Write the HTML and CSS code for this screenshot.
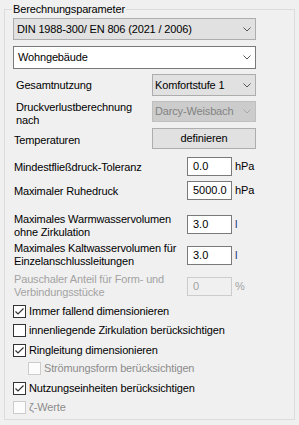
FILE: index.html
```html
<!DOCTYPE html>
<html lang="de">
<head>
<meta charset="utf-8">
<link rel="stylesheet" href="styles.css">
</head>
<body>
<div class="group">
  <div class="legend">Berechnungsparameter</div>

  <div class="combo c1"><span class="val">DIN 1988-300/ EN 806 (2021 / 2006)</span><svg class="chev" width="8" height="5" viewBox="0 0 8 5"><path d="M0.5 0.5 L4 4 L7.5 0.5" /></svg></div>
  <div class="combo c2 white"><span class="val">Wohngebäude</span><svg class="chev" width="8" height="5" viewBox="0 0 8 5"><path d="M0.5 0.5 L4 4 L7.5 0.5" /></svg></div>

  <div class="row r-gesamt">
    <div class="lbl ind">Gesamtnutzung</div>
    <div class="combo small"><span class="val">Komfortstufe 1</span><svg class="chev" width="8" height="5" viewBox="0 0 8 5"><path d="M0.5 0.5 L4 4 L7.5 0.5" /></svg></div>
  </div>

  <div class="row r-druck">
    <div class="lbl ind">Druckverlustberechnung<br>nach</div>
    <div class="combo small disabled"><span class="val">Darcy-Weisbach</span><svg class="chev" width="8" height="5" viewBox="0 0 8 5"><path d="M0.5 0.5 L4 4 L7.5 0.5" /></svg></div>
  </div>

  <div class="row r-temp">
    <div class="lbl">Temperaturen</div>
    <div class="btn">definieren</div>
  </div>

  <div class="trow r-mind">
    <div class="lbl">Mindestfließdruck-Toleranz</div>
    <div class="tb">0.0</div>
    <div class="unit">hPa</div>
  </div>

  <div class="trow r-ruhe">
    <div class="lbl">Maximaler Ruhedruck</div>
    <div class="tb">5000.0</div>
    <div class="unit">hPa</div>
  </div>

  <div class="trow two r-warm">
    <div class="lbl">Maximales Warmwasservolumen<br>ohne Zirkulation</div>
    <div class="tb">3.0</div>
    <div class="unit liter">l</div>
  </div>

  <div class="trow two r-kalt">
    <div class="lbl">Maximales Kaltwasservolumen für<br>Einzelanschlussleitungen</div>
    <div class="tb">3.0</div>
    <div class="unit liter">l</div>
  </div>

  <div class="trow two r-paus off">
    <div class="lbl">Pauschaler Anteil für Form- und<br>Verbindungsstücke</div>
    <div class="tb">0</div>
    <div class="unit">%</div>
  </div>

  <div class="cb first">
    <span class="box"><svg width="11" height="11" viewBox="0 0 11 11"><path d="M1.5 5.5 L4 8 L9.5 2.5" /></svg></span>
    <span class="txt">Immer fallend dimensionieren</span>
  </div>
  <div class="cb">
    <span class="box"></span>
    <span class="txt">innenliegende Zirkulation berücksichtigen</span>
  </div>
  <div class="cb g7">
    <span class="box"><svg width="11" height="11" viewBox="0 0 11 11"><path d="M1.5 5.5 L4 8 L9.5 2.5" /></svg></span>
    <span class="txt">Ringleitung dimensionieren</span>
  </div>
  <div class="cb sub off g5">
    <span class="box"></span>
    <span class="txt">Strömungsform berücksichtigen</span>
  </div>
  <div class="cb g7">
    <span class="box"><svg width="11" height="11" viewBox="0 0 11 11"><path d="M1.5 5.5 L4 8 L9.5 2.5" /></svg></span>
    <span class="txt">Nutzungseinheiten berücksichtigen</span>
  </div>
  <div class="cb off">
    <span class="box"></span>
    <span class="txt">ζ-Werte</span>
  </div>
</div>
</body>
</html>
```
FILE: styles.css
```css
* { box-sizing: border-box; }

html, body {
  margin: 0;
  padding: 0;
  background: #f0f0f0;
}

body {
  font-family: "Liberation Sans", Arial, sans-serif;
  font-size: 11px;
  letter-spacing: -0.15px;
  line-height: 13px;
  color: #000;
  width: 299px;
  height: 425px;
  overflow: hidden;
  padding-top: 9px;
}

.group {
  position: relative;
  margin-left: 4px;
  width: 291px;
  height: 411px;
  border: 1px solid #dcdcdc;
  padding: 0 0 0 8px;
  display: flex;
  flex-direction: column;
  align-items: flex-start;
}

.legend {
  position: absolute;
  top: -7px;
  left: 7px;
  padding: 0 1px;
  background: #f0f0f0;
}

.combo {
  display: flex;
  align-items: center;
  justify-content: space-between;
  height: 22px;
  border: 1px solid #adadad;
  background: #e1e1e1;
  padding: 0 4px 0 3px;
  white-space: nowrap;
}

.combo .chev path {
  fill: none;
  stroke: #555;
  stroke-width: 1;
}

.c1 {
  width: 243px;
  margin-top: 8px;
}

.c2 {
  width: 243px;
  height: 23px;
  margin-top: 6px;
  background: #fff;
  border-color: #7a7a7a;
  padding-left: 4px;
}

.combo.small {
  width: 104px;
  padding-left: 2px;
}

.combo.disabled {
  height: 21px;
  background: #cccccc;
  border-color: #bfbfbf;
  color: #838383;
}

.combo.disabled .chev path {
  stroke: #a8a8a8;
}

.row {
  display: grid;
  grid-template-columns: 139px 104px;
  align-items: start;
  width: 243px;
}

.lbl {
  white-space: nowrap;
  padding-left: 1px;
}

.lbl.ind {
  padding-left: 3px;
}

.r-gesamt {
  margin-top: 5px;
  height: 22px;
  align-items: center;
}

.r-druck {
  margin-top: 5px;
  height: 27px;
}

.r-temp {
  height: 21px;
  align-items: center;
}

.r-temp .lbl {
  padding-top: 3px;
}

.btn {
  height: 21px;
  width: 104px;
  border: 1px solid #adadad;
  background: #e1e1e1;
  display: flex;
  align-items: center;
  justify-content: center;
}

.trow {
  display: grid;
  grid-template-columns: 174px 45px auto;
  align-items: start;
  height: 19px;
}

.tb {
  height: 19px;
  width: 45px;
  border: 1px solid #7a7a7a;
  background: #fff;
  padding-left: 5px;
  display: flex;
  align-items: center;
  letter-spacing: 0;
}

.unit {
  padding-left: 3px;
  margin-top: 3px;
}

.unit.liter {
  color: #1f2f7a;
}

.r-mind {
  margin-top: 8px;
}

.r-mind .lbl,
.r-ruhe .lbl {
  margin-top: 4px;
}

.r-ruhe {
  margin-top: 5px;
}

.trow.two {
  height: 26px;
}

.r-warm {
  margin-top: 13px;
}

.r-warm .tb,
.r-warm .unit {
  margin-top: 2px;
}

.r-warm .unit {
  margin-top: 5px;
}

.r-kalt {
  margin-top: 3px;
}

.r-kalt .tb,
.r-paus .tb {
  margin-top: 4px;
}

.r-kalt .unit,
.r-paus .unit {
  margin-top: 7px;
}

.r-paus {
  margin-top: 5px;
}

.off {
  color: #a3a3a3;
}

.off .tb {
  border-color: #cccccc;
  background: #f0f0f0;
  color: #a3a3a3;
}

.cb {
  display: flex;
  align-items: center;
  height: 13px;
  margin-top: 6px;
  white-space: nowrap;
}

.cb.g7 { margin-top: 7px; }
.cb.g5 { margin-top: 5px; }

.cb .box {
  width: 13px;
  height: 13px;
  border: 1px solid #333;
  background: #fff;
  flex: none;
  display: block;
}

.cb .box svg {
  display: block;
}

.cb .box path {
  fill: none;
  stroke: #333;
  stroke-width: 1.2;
}

.cb .txt {
  margin-left: 3px;
}

.cb.sub {
  margin-left: 15px;
}

.cb.off {
  color: #8c8c8c;
}

.cb.off .box {
  border-color: #cccccc;
  background: #fcfcfc;
}
```
